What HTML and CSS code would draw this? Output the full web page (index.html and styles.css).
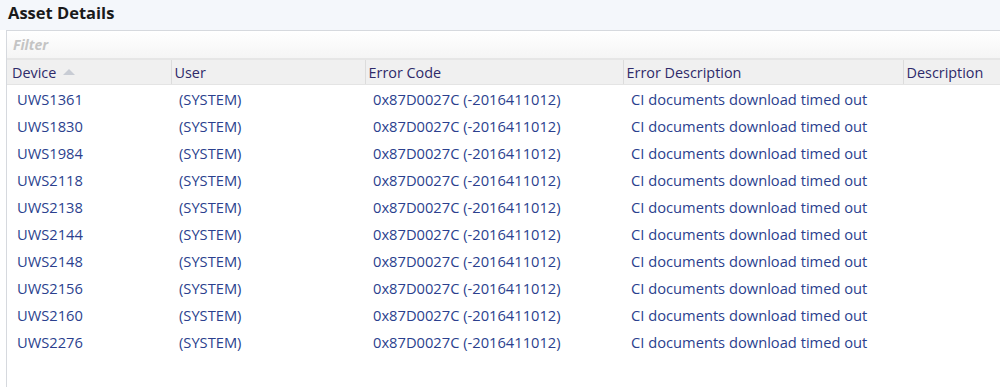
FILE: index.html
```html
<!DOCTYPE html>
<html lang="en">
  <head>
    <meta charset="UTF-8" />
    <title>Asset Details</title>
    <link rel="stylesheet" href="styles.css">
  </head>
  <body>
    <div class="page">
      <h1 class="title">Asset Details</h1>
      <div class="panel">
        <div class="filter">Filter</div>
        <table class="grid">
          <colgroup>
            <col class="c-device" />
            <col class="c-user" />
            <col class="c-code" />
            <col class="c-err" />
            <col />
          </colgroup>
          <thead>
            <tr>
              <th>Device <span class="sort"></span></th>
              <th>User</th>
              <th>Error Code</th>
              <th>Error Description</th>
              <th>Description</th>
            </tr>
          </thead>
          <tbody>
            <tr><td>UWS1361</td><td>(SYSTEM)</td><td>0x87D0027C (-2016411012)</td><td>CI documents download timed out</td><td></td></tr>
            <tr><td>UWS1830</td><td>(SYSTEM)</td><td>0x87D0027C (-2016411012)</td><td>CI documents download timed out</td><td></td></tr>
            <tr><td>UWS1984</td><td>(SYSTEM)</td><td>0x87D0027C (-2016411012)</td><td>CI documents download timed out</td><td></td></tr>
            <tr><td>UWS2118</td><td>(SYSTEM)</td><td>0x87D0027C (-2016411012)</td><td>CI documents download timed out</td><td></td></tr>
            <tr><td>UWS2138</td><td>(SYSTEM)</td><td>0x87D0027C (-2016411012)</td><td>CI documents download timed out</td><td></td></tr>
            <tr><td>UWS2144</td><td>(SYSTEM)</td><td>0x87D0027C (-2016411012)</td><td>CI documents download timed out</td><td></td></tr>
            <tr><td>UWS2148</td><td>(SYSTEM)</td><td>0x87D0027C (-2016411012)</td><td>CI documents download timed out</td><td></td></tr>
            <tr><td>UWS2156</td><td>(SYSTEM)</td><td>0x87D0027C (-2016411012)</td><td>CI documents download timed out</td><td></td></tr>
            <tr><td>UWS2160</td><td>(SYSTEM)</td><td>0x87D0027C (-2016411012)</td><td>CI documents download timed out</td><td></td></tr>
            <tr><td>UWS2276</td><td>(SYSTEM)</td><td>0x87D0027C (-2016411012)</td><td>CI documents download timed out</td><td></td></tr>
          </tbody>
        </table>
      </div>
    </div>
  </body>
</html>
```

FILE: styles.css
```css
body {
  margin: 0;
  padding: 0;
  font-family: "Open Sans", "Noto Sans", sans-serif;
  background-color: #fff;
  overflow: hidden;
}
.page {
  height: 387px;
  background: linear-gradient(to bottom, #f4f7fb 0px, #f4f7fb 30px, #fff 30px);
}
.title {
  margin: 0;
  padding: 1px 8px 0;
  height: 29px;
  font-size: 16.5px;
  font-weight: bold;
  color: #1a1a1a;
}
.panel {
  margin-left: 6px;
  border-top: 1px solid #d6d9de;
  border-left: 1px solid #d6d9de;
  background-color: #fff;
  height: 356px;
}
.filter {
  height: 27px;
  line-height: 28px;
  padding-left: 6px;
  font-size: 14px;
  font-style: italic;
  font-weight: bold;
  color: #c4c4c4;
  background: linear-gradient(to bottom, #fff, #f5f5f5);
  border-bottom: 2px solid #e6e6e6;
}
.grid {
  width: 100%;
  border-collapse: collapse;
  table-layout: fixed;
}
.c-device { width: 164px; }
.c-user { width: 194px; }
.c-code { width: 258px; }
.c-err { width: 280px; }
.grid th {
  height: 24px;
  padding: 0 0 0 3px;
  text-align: left;
  font-size: 14.4px;
  font-weight: normal;
  color: #2e2a6a;
  background-color: #f0f0f0;
  border-left: 1px solid #dcdcdc;
  border-bottom: 1px solid #e4e4e4;
  white-space: nowrap;
}
.grid th:first-child {
  border-left: none;
  padding-left: 5px;
}
.sort {
  display: inline-block;
  margin-left: 3px;
  vertical-align: middle;
  border-left: 6px solid transparent;
  border-right: 6px solid transparent;
  border-bottom: 6px solid #c8ccd4;
  position: relative;
  top: -2px;
}
.grid td {
  height: 27px;
  padding: 0 0 0 8px;
  font-size: 14.7px;
  color: #2b3f8e;
  white-space: nowrap;
}
.grid td:first-child {
  padding-left: 10px;
}
```
